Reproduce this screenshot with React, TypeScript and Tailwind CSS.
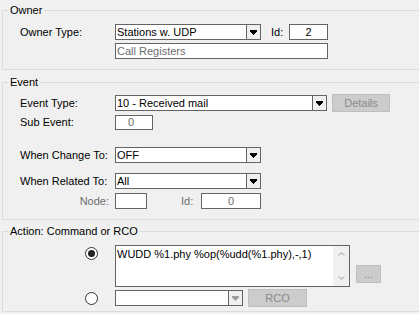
import React from "react";

// little dropdown arrow drawn pixel by pixel
const Arrow: React.FC<{ disabled?: boolean }> = ({ disabled }) => (
  <svg width="7" height="5" shapeRendering="crispEdges" fill={disabled ? "#a0a0a0" : "#000"}>
    <rect x="0" y="0" width="7" height="2" />
    <rect x="1" y="2" width="5" height="1" />
    <rect x="2" y="3" width="3" height="1" />
    <rect x="3" y="4" width="1" height="1" />
  </svg>
);

const Combo: React.FC<{ value: string; width: string; disabled?: boolean }> = ({ value, width, disabled }) => (
  <div className={`${width} h-[16px] flex border border-[#646464] bg-white`}>
    <div className="flex-1 flex items-center pl-[1px] text-black whitespace-nowrap overflow-hidden">{value}</div>
    <div className="w-[14px] h-full flex items-center justify-center border-l border-[#646464] bg-[#f0f0f0]">
      <Arrow disabled={disabled} />
    </div>
  </div>
);

const Button: React.FC<{ label: string; width: string }> = ({ label, width }) => (
  <div className={`${width} h-[18px] flex items-center justify-center bg-[#cccccc] border border-[#bfbfbf] text-[#8a8a8a]`}>
    {label}
  </div>
);

const Radio: React.FC<{ checked?: boolean }> = ({ checked }) => (
  <div className="w-[13px] h-[13px] rounded-full border border-[#333] bg-white flex items-center justify-center">
    {checked && <div className="w-[7px] h-[7px] rounded-full bg-[#222]" />}
  </div>
);

const Group: React.FC<{ title: string; height: string; top: string; children: React.ReactNode }> = ({ title, height, top, children }) => (
  <div className={`relative ${top} ${height} w-[430px] border border-[#dcdcdc]`}>
    <span className="absolute left-[5px] top-[-7px] px-[2px] bg-[#f0f0f0] leading-[13px] text-black">{title}</span>
    {children}
  </div>
);

const App: React.FC = () => {
  return (
    <div className="w-[419px] h-[314px] overflow-hidden bg-[#f0f0f0] pl-[2px] font-['Liberation_Sans',Arial,sans-serif] text-[11px] leading-[13px] text-black">
      {/* Owner */}
      <Group title="Owner" top="mt-[10px]" height="h-[60px]">
        <div className="flex items-center h-[16px] mt-[13px] pl-[17px]">
          <span className="w-[95px]">Owner Type:</span>
          <Combo value="Stations w. UDP" width="w-[146px]" />
          <span className="ml-[10px] w-[18px]">Id:</span>
          <div className="w-[39px] h-[16px] border border-[#646464] bg-white flex items-center justify-center">2</div>
        </div>
        <div className="mt-[3px] ml-[112px] w-[213px] h-[16px] border border-[#646464] bg-white flex items-center pl-[1px] text-[#6d6d6d]">
          Call Registers
        </div>
      </Group>

      {/* Event */}
      <Group title="Event" top="mt-[12px]" height="h-[138px]">
        <div className="flex items-center h-[16px] mt-[12px] pl-[17px]">
          <span className="w-[95px]">Event Type:</span>
          <Combo value="10 - Received mail" width="w-[212px]" />
          <div className="ml-[5px]">
            <Button label="Details" width="w-[58px]" />
          </div>
        </div>
        <div className="flex items-center h-[15px] mt-[4px] pl-[17px]">
          <span className="w-[95px]">Sub Event:</span>
          <div className="w-[38px] h-[15px] border border-[#646464] bg-white flex items-center pl-[12px] text-[#6d6d6d]">0</div>
        </div>
        <div className="flex items-center h-[16px] mt-[17px] pl-[17px]">
          <span className="w-[95px]">When Change To:</span>
          <Combo value="OFF" width="w-[146px]" />
        </div>
        <div className="flex items-center h-[16px] mt-[10px] pl-[17px]">
          <span className="w-[95px]">When Related To:</span>
          <Combo value="All" width="w-[146px]" />
        </div>
        <div className="flex items-center h-[16px] mt-[4px] pl-[17px] text-[#6d6d6d]">
          <span className="w-[89px] text-right mr-[6px]">Node:</span>
          <div className="w-[32px] h-[16px] border border-[#646464] bg-white" />
          <span className="ml-[34px] w-[20px]">Id:</span>
          <div className="w-[60px] h-[16px] border border-[#646464] bg-white flex items-center justify-center">0</div>
        </div>
      </Group>

      {/* Action */}
      <Group title="Action: Command or RCO" top="mt-[11px]" height="h-[81px]">
        <div className="flex items-start mt-[13px] pl-[82px]">
          <div className="mt-[2px]">
            <Radio checked />
          </div>
          <div className="ml-[17px] w-[235px] h-[42px] border border-[#646464] bg-white flex">
            <div className="flex-1 pl-[1px] pt-[2px] whitespace-nowrap overflow-hidden">WUDD %1.phy %op(%udd(%1.phy),-,1)</div>
            <div className="w-[16px] h-full bg-[#f0f0f0] flex flex-col items-center justify-between py-[6px]">
              <svg width="7" height="4" viewBox="0 0 7 4" fill="none" stroke="#bfbfbf" strokeWidth="1.2">
                <path d="M0.5 3.5 L3.5 0.7 L6.5 3.5" />
              </svg>
              <svg width="7" height="4" viewBox="0 0 7 4" fill="none" stroke="#bfbfbf" strokeWidth="1.2">
                <path d="M0.5 0.5 L3.5 3.3 L6.5 0.5" />
              </svg>
            </div>
          </div>
          <div className="ml-[6px] mt-[20px]">
            <Button label="..." width="w-[25px]" />
          </div>
        </div>
        <div className="flex items-center h-[16px] mt-[3px] pl-[82px]">
          <Radio />
          <div className="ml-[17px]">
            <Combo value="" width="w-[128px]" disabled />
          </div>
          <div className="ml-[5px]">
            <Button label="RCO" width="w-[59px]" />
          </div>
        </div>
      </Group>
    </div>
  );
};

export default App;
